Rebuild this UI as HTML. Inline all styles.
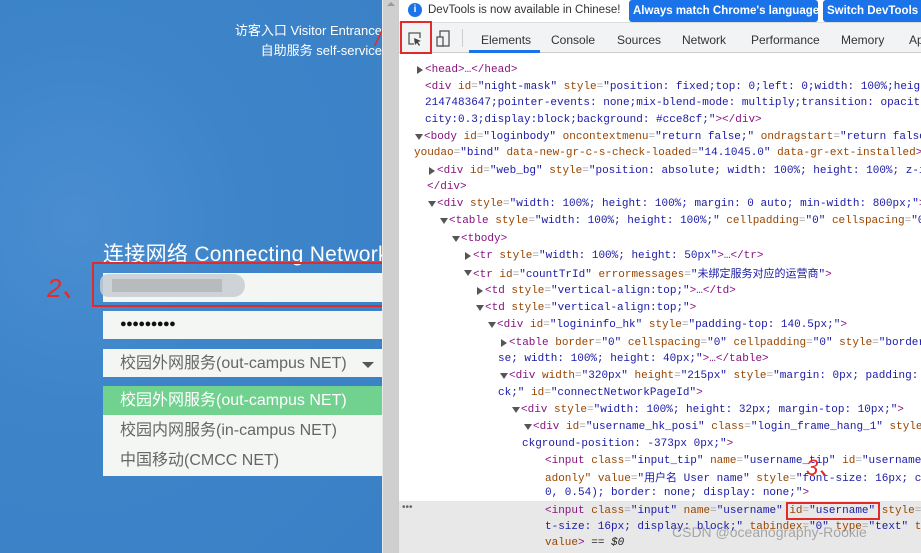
<!DOCTYPE html>
<html><head><meta charset="utf-8"><style>
*{margin:0;padding:0;box-sizing:border-box}
body{width:921px;height:553px;overflow:hidden;position:relative;font-family:"Liberation Sans","Noto Sans CJK SC",sans-serif;background:#fff}
#left{position:absolute;left:0;top:0;width:382px;height:553px;overflow:hidden;background:radial-gradient(ellipse at 20% 40%,#4a8ed0 0%,#3d84c9 40%,#3a80c6 100%)}
.w{position:absolute;color:#fff;white-space:nowrap}
.box{position:absolute;left:103px;width:279px;background:#f3f6f2}
.dd{position:absolute;left:103px;width:279px;height:29px;font-size:16px;color:#666;padding-left:17px;line-height:29px;white-space:nowrap}
#sb{position:absolute;left:382px;top:0;width:16px;height:553px;background:#cfcfcf;border-left:1px solid #e8e8e8}
#dt{position:absolute;left:398px;top:0;width:523px;height:553px;background:#fff;border-left:1px solid #ccc}
.code{position:absolute;font-family:"Liberation Mono",monospace;font-size:11px;white-space:nowrap;color:#881280;height:17px;line-height:17px}
.a{color:#994500}.v{color:#1a1aa6}.p{color:#a5a5a5}.t{color:#881280}.k{color:#222}
.ar{position:absolute;width:0;height:0}
.rt{border-top:4px solid transparent;border-bottom:4px solid transparent;border-left:6px solid #555}
.dn{border-left:4px solid transparent;border-right:4px solid transparent;border-top:6px solid #555}
.tab{position:absolute;top:33px;font-size:12px;color:#333}
</style></head><body>
<div id="left">
<div class="w" style="right:0;top:20px;font-size:13px">访客入口 Visitor Entrance</div>
<div class="w" style="right:0;top:40px;font-size:13px">自助服务 self-service</div>
<div class="w" style="left:103px;top:238px;font-size:21px;letter-spacing:0.3px">连接网络 Connecting Network</div>
<div class="box" style="top:273px;height:29px"></div>
<div style="position:absolute;left:100px;top:274px;width:145px;height:23px;background:#c7cdd2;border-radius:10px 14px 14px 10px;opacity:.85"></div>
<div style="position:absolute;left:112px;top:279px;width:110px;height:13px;background:#b8bbbd"></div>
<div style="position:absolute;left:92px;top:262px;width:294px;height:45px;border:2px solid #e32a2a"></div>
<div class="box" style="top:311px;height:28px"></div>
<div style="position:absolute;left:120px;top:318px;font-size:11px;color:#111;letter-spacing:-0.5px">●●●●●●●●●</div>
<div class="box" style="top:349px;height:28px"></div>
<div class="dd" style="top:349px">校园外网服务(out-campus NET)</div>
<div style="position:absolute;left:362px;top:362px;border-left:6px solid transparent;border-right:6px solid transparent;border-top:6px solid #555"></div>
<div class="box" style="top:386px;height:90px"></div>
<div class="dd" style="top:386px;background:#71d18f;color:#fff">校园外网服务(out-campus NET)</div>
<div class="dd" style="top:416px">校园内网服务(in-campus NET)</div>
<div class="dd" style="top:446px">中国移动(CMCC NET)</div>
<div style="position:absolute;left:47px;top:268px;color:#e82a2a;font-size:26px;font-style:italic">2、</div>
<div style="position:absolute;left:375px;top:26px;color:#e82a2a;font-size:22px;font-style:italic">/.</div>
</div>
<div id="sb"><div style="position:absolute;left:4px;top:2px;border-left:4px solid transparent;border-right:4px solid transparent;border-bottom:4px solid #999"></div></div>
<div id="dt">
<div style="position:absolute;left:0;top:0;width:523px;height:23px;background:#fff;border-bottom:1px solid #ddd"></div>
<div style="position:absolute;left:9px;top:3px;width:14px;height:14px;border-radius:50%;background:#1a73e8;color:#fff;font-size:10px;text-align:center;line-height:14px;font-weight:bold">i</div>
<div style="position:absolute;left:29px;top:4px;font-size:11.5px;color:#333;white-space:nowrap">DevTools is now available in Chinese!</div>
<div style="position:absolute;left:230px;top:0;width:189px;height:22px;background:#1a73e8;border-radius:3px;color:#fff;font-size:11.5px;font-weight:bold;line-height:22px;padding-left:4px;white-space:nowrap;overflow:hidden">Always match Chrome's language</div>
<div style="position:absolute;left:424px;top:0;width:110px;height:22px;background:#1a73e8;border-radius:3px;color:#fff;font-size:11.5px;font-weight:bold;line-height:22px;padding-left:4px;white-space:nowrap;overflow:hidden">Switch DevTools to</div>
<div style="position:absolute;left:0;top:23px;width:523px;height:30px;background:#f1f3f4;border-bottom:1px solid #ccc"></div>
<svg style="position:absolute;left:9px;top:32px" width="14" height="14"><path d="M6 12H1V1h11v5" fill="none" stroke="#555" stroke-width="1.3"/><path d="M6 6l7 3-3 1 2 3-1 1-2-3-2 2z" fill="#444"/></svg>
<svg style="position:absolute;left:37px;top:30px" width="14" height="18"><rect x="4" y="1" width="9" height="15" fill="none" stroke="#555" stroke-width="1.3"/><rect x="1" y="7" width="6" height="9" fill="#f1f3f4" stroke="#555" stroke-width="1.3"/></svg>
<div style="position:absolute;left:63px;top:29px;width:1px;height:18px;background:#ccc"></div>
<div style="position:absolute;left:1px;top:21px;width:32px;height:33px;border:2px solid #e32a2a"></div>
<div class="tab" style="left:82px">Elements</div>
<div style="position:absolute;left:70px;top:50px;width:71px;height:3px;background:#1a73e8"></div>
<div class="tab" style="left:152px">Console</div>
<div class="tab" style="left:218px">Sources</div>
<div class="tab" style="left:283px">Network</div>
<div class="tab" style="left:352px">Performance</div>
<div class="tab" style="left:442px">Memory</div>
<div class="tab" style="left:510px">Ap</div>
<div style="position:absolute;left:0;top:501px;width:523px;height:52px;background:#e8e8e8"></div>
<div style="position:absolute;left:3px;top:502px;font-size:10px;color:#666">•••</div>
</div>
<div class="ar rt" style="left:417px;top:66px"></div>
<div class="code" style="left:425px;top:62px">&lt;head&gt;…&lt;/head&gt;</div>
<div class="code" style="left:425px;top:79px">&lt;div <span class="a">id</span><span class="p">=</span><span class="v">"night-mask"</span> <span class="a">style</span><span class="p">=</span><span class="v">"position: fixed;top: 0;left: 0;width: 100%;heig</span></div>
<div class="code v" style="left:425px;top:95px">2147483647;pointer-events: none;mix-blend-mode: multiply;transition: opacit</div>
<div class="code" style="left:425px;top:112px"><span class="v">city:0.3;display:block;background: #cce8cf;"</span>&gt;&lt;/div&gt;</div>
<div class="ar dn" style="left:415px;top:134px"></div>
<div class="code" style="left:424px;top:129px">&lt;body <span class="a">id</span><span class="p">=</span><span class="v">"loginbody"</span> <span class="a">oncontextmenu</span><span class="p">=</span><span class="v">"return false;"</span> <span class="a">ondragstart</span><span class="p">=</span><span class="v">"return false</span></div>
<div class="code" style="left:414px;top:145px"><span class="a">youdao</span><span class="p">=</span><span class="v">"bind"</span> <span class="a">data-new-gr-c-s-check-loaded</span><span class="p">=</span><span class="v">"14.1045.0"</span> <span class="a">data-gr-ext-installed</span>&gt;</div>
<div class="ar rt" style="left:429px;top:167px"></div>
<div class="code" style="left:437px;top:163px">&lt;div <span class="a">id</span><span class="p">=</span><span class="v">"web_bg"</span> <span class="a">style</span><span class="p">=</span><span class="v">"position: absolute; width: 100%; height: 100%; z-i</span></div>
<div class="code" style="left:427px;top:179px">&lt;/div&gt;</div>
<div class="ar dn" style="left:428px;top:201px"></div>
<div class="code" style="left:437px;top:196px">&lt;div <span class="a">style</span><span class="p">=</span><span class="v">"width: 100%; height: 100%; margin: 0 auto; min-width: 800px;"</span>&gt;</div>
<div class="ar dn" style="left:440px;top:218px"></div>
<div class="code" style="left:449px;top:213px">&lt;table <span class="a">style</span><span class="p">=</span><span class="v">"width: 100%; height: 100%;"</span> <span class="a">cellpadding</span><span class="p">=</span><span class="v">"0"</span> <span class="a">cellspacing</span><span class="p">=</span><span class="v">"0</span></div>
<div class="ar dn" style="left:452px;top:236px"></div>
<div class="code" style="left:461px;top:231px">&lt;tbody&gt;</div>
<div class="ar rt" style="left:465px;top:252px"></div>
<div class="code" style="left:473px;top:248px">&lt;tr <span class="a">style</span><span class="p">=</span><span class="v">"width: 100%; height: 50px"</span>&gt;…&lt;/tr&gt;</div>
<div class="ar dn" style="left:464px;top:270px"></div>
<div class="code" style="left:473px;top:265px">&lt;tr <span class="a">id</span><span class="p">=</span><span class="v">"countTrId"</span> <span class="a">errormessages</span><span class="p">=</span><span class="v">"<span style="font-family:'Noto Sans CJK SC',sans-serif">未绑定服务对应的运营商</span>"</span>&gt;</div>
<div class="ar rt" style="left:477px;top:287px"></div>
<div class="code" style="left:485px;top:283px">&lt;td <span class="a">style</span><span class="p">=</span><span class="v">"vertical-align:top;"</span>&gt;…&lt;/td&gt;</div>
<div class="ar dn" style="left:476px;top:305px"></div>
<div class="code" style="left:485px;top:300px">&lt;td <span class="a">style</span><span class="p">=</span><span class="v">"vertical-align:top;"</span>&gt;</div>
<div class="ar dn" style="left:488px;top:322px"></div>
<div class="code" style="left:497px;top:317px">&lt;div <span class="a">id</span><span class="p">=</span><span class="v">"logininfo_hk"</span> <span class="a">style</span><span class="p">=</span><span class="v">"padding-top: 140.5px;"</span>&gt;</div>
<div class="ar rt" style="left:501px;top:339px"></div>
<div class="code" style="left:509px;top:335px">&lt;table <span class="a">border</span><span class="p">=</span><span class="v">"0"</span> <span class="a">cellspacing</span><span class="p">=</span><span class="v">"0"</span> <span class="a">cellpadding</span><span class="p">=</span><span class="v">"0"</span> <span class="a">style</span><span class="p">=</span><span class="v">"border</span></div>
<div class="code" style="left:498px;top:351px"><span class="v">se; width: 100%; height: 40px;"</span>&gt;…&lt;/table&gt;</div>
<div class="ar dn" style="left:500px;top:373px"></div>
<div class="code" style="left:509px;top:368px">&lt;div <span class="a">width</span><span class="p">=</span><span class="v">"320px"</span> <span class="a">height</span><span class="p">=</span><span class="v">"215px"</span> <span class="a">style</span><span class="p">=</span><span class="v">"margin: 0px; padding: </span></div>
<div class="code" style="left:498px;top:385px"><span class="v">ck;"</span> <span class="a">id</span><span class="p">=</span><span class="v">"connectNetworkPageId"</span>&gt;</div>
<div class="ar dn" style="left:512px;top:407px"></div>
<div class="code" style="left:521px;top:402px">&lt;div <span class="a">style</span><span class="p">=</span><span class="v">"width: 100%; height: 32px; margin-top: 10px;"</span>&gt;</div>
<div class="ar dn" style="left:524px;top:424px"></div>
<div class="code" style="left:533px;top:419px">&lt;div <span class="a">id</span><span class="p">=</span><span class="v">"username_hk_posi"</span> <span class="a">class</span><span class="p">=</span><span class="v">"login_frame_hang_1"</span> <span class="a">style</span></div>
<div class="code" style="left:522px;top:436px"><span class="v">ckground-position: -373px 0px;"</span>&gt;</div>
<div class="code" style="left:545px;top:453px">&lt;input <span class="a">class</span><span class="p">=</span><span class="v">"input_tip"</span> <span class="a">name</span><span class="p">=</span><span class="v">"username_tip"</span> <span class="a">id</span><span class="p">=</span><span class="v">"username</span></div>
<div class="code" style="left:545px;top:469px"><span class="a">adonly"</span> <span class="a">value</span><span class="p">=</span><span class="v">"<span style="font-family:'Noto Sans CJK SC',sans-serif">用户名</span> User name"</span> <span class="a">style</span><span class="p">=</span><span class="v">"font-size: 16px; c</span></div>
<div class="code" style="left:545px;top:485px"><span class="v">0, 0.54); border: none; display: none;"</span>&gt;</div>
<div class="code" style="left:545px;top:503px">&lt;input <span class="a">class</span><span class="p">=</span><span class="v">"input"</span> <span class="a">name</span><span class="p">=</span><span class="v">"username"</span> <span class="a">id</span><span class="p">=</span><span class="v">"username"</span> <span class="a">style</span><span class="p">=</span></div>
<div class="code" style="left:545px;top:519px"><span class="v">t-size: 16px; display: block;"</span> <span class="a">tabindex</span><span class="p">=</span><span class="v">"0"</span> <span class="a">type</span><span class="p">=</span><span class="v">"text"</span> <span class="a">t</span></div>
<div class="code" style="left:545px;top:535px"><span class="a">value</span>&gt; <span class="k">== <i>$0</i></span></div>
<div style="position:absolute;left:786px;top:502px;width:94px;height:18px;border:2px solid #e32a2a"></div>
<div style="position:absolute;left:806px;top:450px;color:#e82a2a;font-size:22px;font-style:italic">3、</div>
<div style="position:absolute;left:672px;top:524px;color:rgba(120,120,120,.6);font-size:14px">CSDN @oceanography-Rookie</div>
</body></html>
